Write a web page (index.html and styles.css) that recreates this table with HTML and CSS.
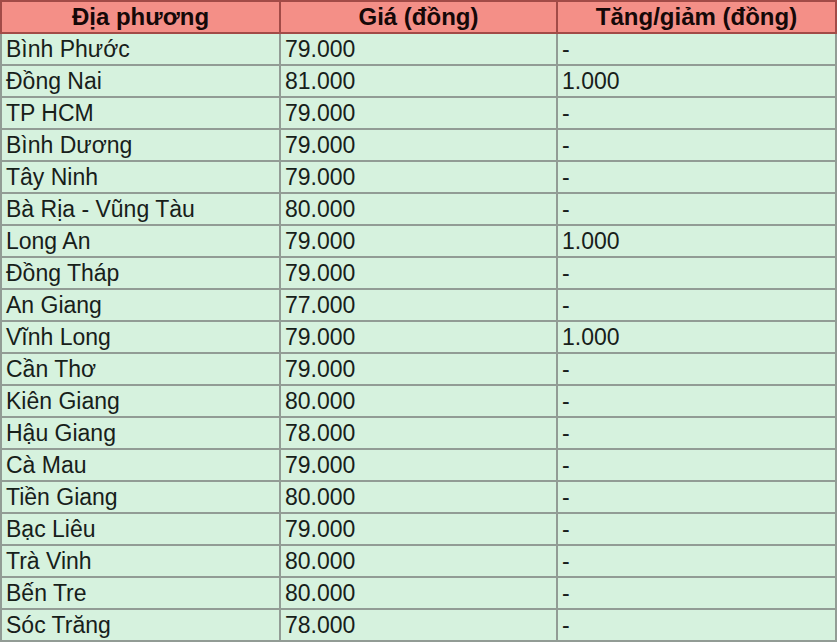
FILE: index.html
```html
<!DOCTYPE html>
<html lang="vi">
<head>
<meta charset="utf-8">
<title>Giá</title>
<link rel="stylesheet" href="styles.css">
</head>
<body>
<table class="price-table">
  <colgroup>
    <col class="c1"><col class="c2"><col class="c3">
  </colgroup>
  <thead>
    <tr><th>Địa phương</th><th>Giá (đồng)</th><th>Tăng/giảm (đồng)</th></tr>
  </thead>
  <tbody>
    <tr><td>Bình Phước</td><td>79.000</td><td>-</td></tr>
    <tr><td>Đồng Nai</td><td>81.000</td><td>1.000</td></tr>
    <tr><td>TP HCM</td><td>79.000</td><td>-</td></tr>
    <tr><td>Bình Dương</td><td>79.000</td><td>-</td></tr>
    <tr><td>Tây Ninh</td><td>79.000</td><td>-</td></tr>
    <tr><td>Bà Rịa - Vũng Tàu</td><td>80.000</td><td>-</td></tr>
    <tr><td>Long An</td><td>79.000</td><td>1.000</td></tr>
    <tr><td>Đồng Tháp</td><td>79.000</td><td>-</td></tr>
    <tr><td>An Giang</td><td>77.000</td><td>-</td></tr>
    <tr><td>Vĩnh Long</td><td>79.000</td><td>1.000</td></tr>
    <tr><td>Cần Thơ</td><td>79.000</td><td>-</td></tr>
    <tr><td>Kiên Giang</td><td>80.000</td><td>-</td></tr>
    <tr><td>Hậu Giang</td><td>78.000</td><td>-</td></tr>
    <tr><td>Cà Mau</td><td>79.000</td><td>-</td></tr>
    <tr><td>Tiền Giang</td><td>80.000</td><td>-</td></tr>
    <tr><td>Bạc Liêu</td><td>79.000</td><td>-</td></tr>
    <tr><td>Trà Vinh</td><td>80.000</td><td>-</td></tr>
    <tr><td>Bến Tre</td><td>80.000</td><td>-</td></tr>
    <tr><td>Sóc Trăng</td><td>78.000</td><td>-</td></tr>
  </tbody>
</table>
</body>
</html>
```

FILE: styles.css
```css
html, body {
  margin: 0;
  padding: 0;
  background: #ffffff;
}

.price-table {
  border-collapse: collapse;
  width: 835px;
  table-layout: fixed;
  font-family: "Liberation Sans", Arial, sans-serif;
  font-size: 23px;
  color: #17201a;
}

.c1 { width: 279px; }
.c2 { width: 277px; }
.c3 { width: 279px; }

.price-table th,
.price-table td {
  height: 30px;
  padding: 0 0 0 4px;
  line-height: 30px;
  border: 2px solid #929c95;
  white-space: nowrap;
  overflow: hidden;
}

.price-table th {
  background: #f48f87;
  border-color: #a24b47;
  color: #150808;
  font-size: 24px;
  font-weight: bold;
  text-align: center;
  padding: 0;
}

.price-table td {
  background: #d6f2de;
  text-align: left;
}
```
